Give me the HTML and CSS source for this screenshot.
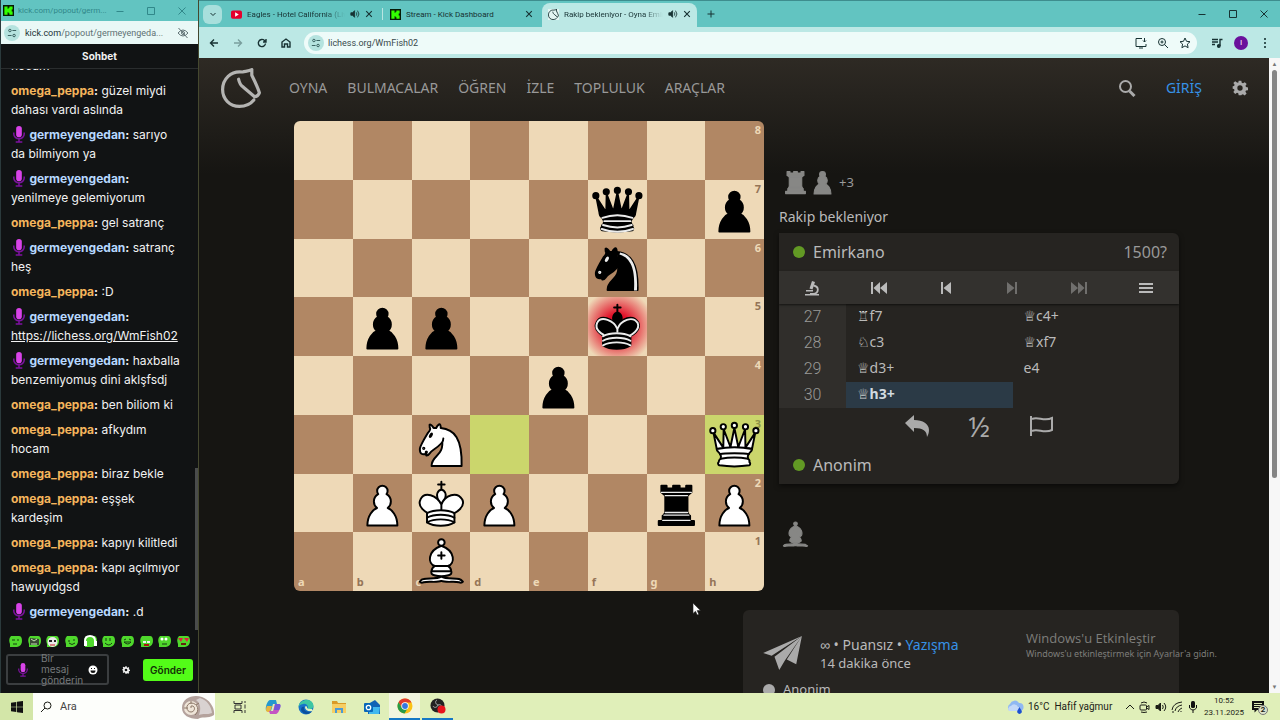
FILE: index.html
```
<!DOCTYPE html>
<html lang="tr">
<head>
  <meta charset="UTF-8" />
  <meta name="viewport" content="width=device-width, initial-scale=1.0" />
  <title>Rakip bekleniyor - Oyna Emirkano</title>
  <link rel="stylesheet" href="styles.css">
</head>
<body>
  <svg class="defs" aria-hidden="true">
    <!-- pieces: --pf is the body, --ps the outline, --pl the inner lines -->
    <symbol id="p" viewBox="0 0 45 45"><path class="pc" d="M22.5 9c-2.21 0-4 1.79-4 4 0 .89.29 1.71.78 2.38C17.33 16.5 16 18.59 16 21c0 2.03.94 3.84 2.41 5.03-3 1.06-7.41 5.55-7.41 13.47h23c0-7.92-4.41-12.41-7.41-13.47 1.47-1.19 2.41-3 2.41-5.03 0-2.41-1.33-4.5-3.28-5.62.49-.67.78-1.49.78-2.38 0-2.21-1.79-4-4-4z"/></symbol>
    <symbol id="n" viewBox="0 0 45 45">
      <g class="pc"><path d="M22 10c10.5 1 16.5 8 16 29H15c0-9 10-6.5 8-21"/><path d="M24 18c.38 2.91-5.55 7.37-8 9-3 2-2.82 4.34-5 4-1.042-.94 1.41-3.04 0-3-1 0 .19 1.23-1 2-1 0-4.003 1-4-4 0-2 6-12 6-12s1.89-1.9 2-3.5c-.73-.994-.5-2-.5-3 1-1 3 2.5 3 2.5h2s.78-1.992 2.5-3c1 0 1 3 1 3"/></g>
      <g class="pl"><circle cx="9" cy="25.5" r=".5"/><ellipse cx="14.5" cy="15.5" rx=".5" ry="1.5" transform="rotate(30 14.5 15.5)"/></g>
      <path class="mane" d="M24.55 10.4l-.45 1.45.5.15c3.15 1 5.65 2.49 7.9 6.75S35.75 29.06 35.25 39l-.05.5h2.25l.05-.5c.5-10.06-.88-16.85-3.25-21.34-2.37-4.49-5.79-6.64-9.19-7.16l-.51-.1z"/>
    </symbol>
    <symbol id="b" viewBox="0 0 45 45">
      <g class="pc"><path d="M9 36c3.39-.97 10.11.43 13.5-2 3.39 2.43 10.11 1.03 13.5 2 0 0 1.65.54 3 2-.68.97-1.65.99-3 .5-3.39-.97-10.11.46-13.5-1-3.39 1.46-10.11.03-13.5 1-1.354.49-2.323.47-3-.5 1.354-1.94 3-2 3-2z"/><path d="M15 32c2.5 2.5 12.5 2.5 15 0 .5-1.5 0-2 0-2 0-2.5-2.5-4-2.5-4 5.5-1.5 6-11.5-5-15.5-11 4-10.5 14-5 15.5 0 0-2.5 1.5-2.5 4 0 0-.5.5 0 2z"/><circle cx="22.5" cy="8" r="2.5"/></g>
      <path class="pl" d="M17.5 26h10M15 30h15m-7.5-14.5v5M20 18h5"/>
    </symbol>
    <symbol id="r" viewBox="0 0 45 45">
      <path class="pc" d="M9 39h27v-3H9v3zm3.5-7l1.5-2.5h17l1.5 2.5h-20zm-.5 4v-4h21v4H12zM14 29.5v-13h17v13H14zM14 16.5L11 14h23l-3 2.5H14zM11 14V9h4v2h5V9h5v2h5V9h4v5H11z"/>
      <path class="pl thin" d="M12 35.5h21m-20-4h19m-18-2h17m-17-13h17M11 14h23"/>
    </symbol>
    <symbol id="q" viewBox="0 0 45 45">
      <g class="pc"><path d="M9 26c8.5-1.5 21-1.5 27 0l2.5-12.5L31 25l-.3-14.1-5.2 13.6-3-14.5-3 14.5-5.2-13.6L14 25 6.5 13.5 9 26z"/><circle cx="6" cy="12" r="2"/><circle cx="14" cy="9" r="2"/><circle cx="22.5" cy="8" r="2"/><circle cx="31" cy="9" r="2"/><circle cx="39" cy="12" r="2"/><path d="M9 26c0 2 1.5 2 2.5 4 1 1.5 1 1 .5 3.5-1.5 1-1.5 2.5-1.5 2.5-1.5 1.5.5 2.5.5 2.5 6.5 1 16.5 1 23 0 0 0 1.5-1 0-2.5 0 0 .5-1.5-1-2.5-.5-2.5-.5-2 .5-3.5 1-2 2.5-2 2.5-4-8.5-1.5-18.5-1.5-27 0z"/></g>
      <path class="pl white-lines" d="M11.5 30c3.5-1 18.5-1 22 0M12 33.5c6-1 15-1 21 0"/>
      <path class="pl black-lines" d="M11 29a35 35 1 0 1 23 0m-21.5 2.5h20m-21 3a35 35 1 0 0 22 0m-23 3a35 35 1 0 0 24 0"/>
    </symbol>
    <symbol id="k" viewBox="0 0 45 45">
      <g class="pc"><path d="M22.5 11.63V6M20 8h5"/><path d="M22.5 25s4.5-7.5 3-10.5c0 0-1-2.5-3-2.5s-3 2.5-3 2.5c-1.5 3 3 10.5 3 10.5"/><path d="M11.5 37c5.5 3.5 15.5 3.5 21 0v-7s9-4.5 6-10.5c-4-6.5-13.5-3.5-16 4V27v-3.5c-3.5-7.5-13-10.5-16-4-3 6 5 10 5 10V37z"/></g>
      <path class="pl black-lines" d="M32 29.5s8.5-4 6.03-9.65C34.15 14 25 18 22.5 24.5l.01 2.1-.01-2.1C20 18 9.906 14 6.997 19.85c-2.497 5.65 4.853 9 4.853 9"/>
      <path class="pl" d="M11.5 30c5.5-3 15.5-3 21 0m-21 3.5c5.5-3 15.5-3 21 0m-21 3.5c5.5-3 15.5-3 21 0"/>
    </symbol>

    <symbol id="mic" viewBox="0 0 14 18"><rect x="4" y="0" width="6" height="12" rx="3" fill="#d843e8"/><path d="M1.500 7v1.500a5.500 5 0 0 0 11 0V7M7 13.500V17M3.500 17h7" fill="none" stroke="#7d12a0" stroke-width="1.600"/></symbol>
    <symbol id="kick" viewBox="0 0 12 12"><path fill="#061a06" d="M0 0h12v12H0z"/><path fill="#3f0" d="M1.500 1.500h3.500v2.500h1v-1h1v-1.500h3.500v3.500h-1v2h1v3.500H7V9H6V8H5v2.500H1.500z"/></symbol>
    <symbol id="close" viewBox="0 0 10 10"><path d="M1.500 1.500l7 7m0-7l-7 7"/></symbol>
    <symbol id="max" viewBox="0 0 10 10"><path d="M1.500 1.500h7v7h-7z"/></symbol>
    <symbol id="min" viewBox="0 0 10 10"><path d="M1.500 5.500h7"/></symbol>
    <symbol id="tune" viewBox="0 0 12 12"><path d="M6.500 3H11M1 9h4.500"/><circle cx="3.500" cy="3" r="1.500"/><circle cx="8.500" cy="9" r="1.500"/></symbol>
    <symbol id="sound" viewBox="0 0 12 12"><path d="M1 4.500h2L5.500 2v8L3 7.500H1z" fill="currentColor"/><path d="M7.500 4q1.500 2 0 4M9 2q3.500 4 0 8"/></symbol>
    <symbol id="gear" viewBox="0 0 24 24"><path fill="currentColor" fill-rule="evenodd" d="M10 1h4l.6 3.200 1.900.8 2.700-1.800 2.800 2.800-1.800 2.700.8 1.900 3 .6v4l-3.100.6-.8 1.900 1.800 2.700-2.800 2.800-2.700-1.800-1.900.8L14 23h-4l-.6-3.100-1.900-.8-2.700 1.800L2 18.100l1.800-2.700-.8-1.900-2-.5V9.500l2.100-.5.8-1.900L2 4.600 4.800 2l2.700 1.800L9.400 4zM12 8a4 4 0 1 0 0 8 4 4 0 0 0 0-8z"/></symbol>
    <symbol id="horse" viewBox="0 0 50 50"><path fill="none" stroke="currentColor" stroke-linejoin="round" stroke-linecap="round" d="M38.500 2C35 4 31 4 27 5 12 3 2 14 2 27c0 12 9 21 21 21 8 0 14-3 18-8M38.500 2v7c4 8 7 14 9.500 22-1 3-3 5-6 5L28 24c-3-2-5-5-6-10"/></symbol>
    <symbol id="prev" viewBox="0 0 16 14"><path fill="currentColor" d="M3 1h2v12H3zM13 1v12L5.500 7z"/></symbol>
    <symbol id="first" viewBox="0 0 16 14"><path fill="currentColor" d="M0 1h2v12H0zM9 1v12L2.500 7zM16 1v12L9 7z"/></symbol>
  </svg>

  <main class="desktop">
    <section class="chat-window">
      <header class="chat-title">
        <svg class="i11"><use href="#kick"/></svg>
        <span class="title-text">kick.com/popout/germ...</span>
        <div class="win-buttons">
          <svg class="line i10"><use href="#min"/></svg>
          <svg class="line i10"><use href="#max"/></svg>
          <svg class="line i10"><use href="#close"/></svg>
        </div>
      </header>
      <div class="chat-url">
        <span class="tune"><svg class="line i10"><use href="#tune"/></svg></span>
        <span class="url-text"><b>kick.com</b>/popout/germeyengeda...</span>
        <svg class="line i12" viewBox="0 0 12 12"><path d="M1 6q5-6 10 0-5 6-10 0zM1.500 1l9 10"/><circle cx="6" cy="6" r="1.500"/></svg>
      </div>
      <h2 class="chat-head">Sohbet</h2>
      <ul class="messages" id="messages"></ul>
      <div class="emotes" id="emotes"></div>
      <form class="composer">
        <div class="composer-box">
          <svg class="mic"><use href="#mic"/></svg>
          <textarea aria-label="Mesaj" rows="3" placeholder="Bir&#10;mesaj&#10;gönderin"></textarea>
          <svg class="i10" viewBox="0 0 10 10"><circle cx="5" cy="5" r="4.500" fill="#fff"/><path d="M2.500 5.500h5a2.500 2.500 0 0 1-5 0zM3 3h1v1H3zM6 3h1v1H6z" fill="#111"/></svg>
        </div>
        <button type="button" class="bare" aria-label="Ayarlar"><svg class="i8"><use href="#gear"/></svg></button>
        <button type="button" class="send">Gönder</button>
      </form>
    </section>

    <section class="browser">
      <header class="tabs">
        <button class="tab-list" aria-label="Sekmeler"><svg class="line i8" viewBox="0 0 8 8"><path d="M1.500 3L4 5.500 6.500 3"/></svg></button>
        <div class="tab divided">
          <svg class="i11" viewBox="0 0 12 12"><rect y="1.500" width="12" height="9" rx="2" fill="#e5002d"/><path d="M4.500 3.500v5L8.500 6z" fill="#fff"/></svg>
          <span class="tab-name fade">Eagles - Hotel California (Live 1977)</span>
          <svg class="line i10"><use href="#sound"/></svg>
          <svg class="line bold i8"><use href="#close"/></svg>
        </div>
        <div class="tab">
          <svg class="i11"><use href="#kick"/></svg>
          <span class="tab-name">Stream - Kick Dashboard</span>
          <svg class="line bold i8"><use href="#close"/></svg>
        </div>
        <div class="tab active">
          <svg class="i11 horse-small"><use href="#horse"/></svg>
          <span class="tab-name fade">Rakip bekleniyor - Oyna Emirkano</span>
          <svg class="line i10"><use href="#sound"/></svg>
          <svg class="line bold i8"><use href="#close"/></svg>
        </div>
        <button class="new-tab bare" aria-label="Yeni sekme"><svg class="line i10" viewBox="0 0 10 10"><path d="M5 1.500v7M1.500 5h7"/></svg></button>
        <div class="win-buttons">
          <svg class="line i10"><use href="#min"/></svg>
          <svg class="line i10"><use href="#max"/></svg>
          <svg class="line i10"><use href="#close"/></svg>
        </div>
      </header>
      <div class="toolbar">
        <svg class="line bold i10" viewBox="0 0 10 10"><path d="M9 5H1.500M5 1.500L1.500 5 5 8.500"/></svg>
        <svg class="line bold dim i10" viewBox="0 0 10 10"><path d="M1 5h7.500M5 1.500L8.500 5 5 8.500"/></svg>
        <svg class="line bold i10" viewBox="0 0 10 10"><path d="M8.500 5.500A3.600 3.600 0 1 1 7.500 2.500L8.800 4M9 1v3H6"/></svg>
        <svg class="line bold i10" viewBox="0 0 10 10"><path d="M1 9V4l4-3 4 3v5H6.500V6h-3v3z"/></svg>
        <div class="omnibox">
          <span class="tune"><svg class="line i10"><use href="#tune"/></svg></span>
          <input class="address" aria-label="Adres" value="lichess.org/WmFish02">
          <svg class="line i12" viewBox="0 0 12 12"><path d="M7 1.500H1v8h10V7M4 11h4M9.500 1v4M8 3.500L9.500 5 11 3.500"/></svg>
          <svg class="line i12" viewBox="0 0 12 12"><circle cx="5" cy="5" r="3.500"/><path d="M7.500 7.500L11 11M3.500 5h3M5 3.500v3"/></svg>
          <svg class="line i12" viewBox="0 0 12 12"><path d="M6 1l1.500 3.300 3.500.4-2.600 2.400.7 3.600L6 8.900l-3.100 1.800.7-3.600L1 4.700l3.500-.4z"/></svg>
        </div>
        <svg class="line bold i12" viewBox="0 0 12 12"><path d="M1 2.500h6M1 5h6M1 7.500h3M9 9V2.500h2.500"/><circle cx="7.800" cy="9" r="1.200" fill="currentColor"/></svg>
        <span class="avatar">I</span>
        <svg class="i12" viewBox="0 0 12 12"><path d="M5.200 1h1.600v2H5.200zM5.200 5h1.600v2H5.200zM5.200 9h1.600v2H5.200z" fill="#173233"/></svg>
      </div>

      <div class="viewport">
        <div class="page">
          <header class="site-head">
            <a href="#" class="logo" aria-label="lichess.org"><svg><use href="#horse"/></svg></a>
            <nav class="site-nav">
              <a href="#">OYNA</a>
              <a href="#">BULMACALAR</a>
              <a href="#">ÖĞREN</a>
              <a href="#">İZLE</a>
              <a href="#">TOPLULUK</a>
              <a href="#">ARAÇLAR</a>
            </nav>
            <button class="bare" aria-label="Ara"><svg class="i18" viewBox="0 0 18 18"><circle cx="7.500" cy="7.500" r="5.500" fill="none" stroke="currentColor" stroke-width="2"/><path d="M11.500 12l5 5" stroke="currentColor" stroke-width="3"/></svg></button>
            <a href="#" class="signin">GİRİŞ</a>
            <button class="bare" aria-label="Tercihler"><svg class="i16"><use href="#gear"/></svg></button>
          </header>

          <div class="round">
            <div class="board" id="board"></div>
            <aside class="side">
              <div class="material">
                <svg class="piece grey"><use href="#r"/></svg>
                <svg class="piece grey"><use href="#p"/></svg>
                <span>+3</span>
              </div>
              <div class="waiting">Rakip bekleniyor</div>
              <div class="panel">
                <div class="player"><i class="dot"></i><span>Emirkano</span><span class="rating">1500?</span></div>
                <div class="controls">
                  <button aria-label="Analiz"><svg class="i16" viewBox="0 0 16 16"><path fill="currentColor" d="M8 1l3 1-2.500 7.500-3-1zM1 14h14v1.500H1zM2 10h7v1.500H2z"/><path d="M9.500 5.500c6 1 5.500 7.500 0 8.500H6" fill="none" stroke="currentColor" stroke-width="1.800"/></svg></button>
                  <button aria-label="İlk"><svg class="step"><use href="#first"/></svg></button>
                  <button aria-label="Önceki"><svg class="step"><use href="#prev"/></svg></button>
                  <button aria-label="Sonraki" class="off"><svg class="step flip"><use href="#prev"/></svg></button>
                  <button aria-label="Son" class="off"><svg class="step flip"><use href="#first"/></svg></button>
                  <button aria-label="Menü"><svg class="step" viewBox="0 0 16 14"><path d="M1 3h14M1 7h14M1 11h14" stroke="currentColor" stroke-width="2"/></svg></button>
                </div>
                <table class="moves">
                  <tr><th>27</th><td><b>♖</b>f7</td><td><b>♕</b>c4+</td></tr>
                  <tr><th>28</th><td><b>♘</b>c3</td><td><b>♕</b>xf7</td></tr>
                  <tr><th>29</th><td><b>♕</b>d3+</td><td>e4</td></tr>
                  <tr><th>30</th><td class="current"><b>♕</b>h3+</td><td></td></tr>
                </table>
                <div class="actions">
                  <button aria-label="Geri al"><svg class="i26" viewBox="0 0 26 26"><path fill="currentColor" d="M1 10l9-8v5c9 0 15 4 15 10 0 3-1 5-2 7 0-6-4-9-13-9v4z"/></svg></button>
                  <button aria-label="Beraberlik">½</button>
                  <button aria-label="Terk et"><svg class="i26" viewBox="0 0 26 26"><path d="M3 3v20M4 6c6-3 12 3 20-1v12c-8 4-14-2-20 1" fill="none" stroke="currentColor" stroke-width="2"/></svg></button>
                </div>
                <div class="player"><i class="dot"></i><span>Anonim</span></div>
              </div>
              <div class="material bottom"><svg class="piece grey"><use href="#b"/></svg></div>
            </aside>
            <div class="game-meta">
              <svg class="plane" viewBox="0 0 42 36"><path fill="currentColor" d="M41 0L0 18l9 3zM41 0L12 22l5 14 6-10zM41 0L25 25l10 5z"/></svg>
              <div class="meta-text">
                <div class="setup">∞ • Puansız • <a href="#">Yazışma</a></div>
                <div>14 dakika önce</div>
              </div>
              <div class="meta-player"><i class="dot"></i>Anonim</div>
            </div>
          </div>
        </div>
        <div class="scrollbar"><span>▲</span><i></i><span>▼</span></div>
      </div>
    </section>
    <div class="activate"><p>Windows'u Etkinleştir</p><small>Windows'u etkinleştirmek için Ayarlar'a gidin.</small></div>
    <svg class="cursor" viewBox="0 0 10 14"><path d="M1 1v10.500l2.500-2.200 1.700 3.700 1.600-.8L5.200 8.600H8.500z" fill="#fff" stroke="#222" stroke-width=".6"/></svg>
  </main>

  <footer class="taskbar">
    <button class="start" aria-label="Başlat"><svg class="i12" viewBox="0 0 12 12"><path fill="#111" d="M0 1.700l5.300-.8v4.800H0zM6 .8L12 0v5.700H6zM0 6.300h5.300v4.800L0 10.300zM6 6.300h6V12l-6-.8z"/></svg></button>
    <label class="search">
      <svg class="line i12" viewBox="0 0 12 12"><circle cx="7.500" cy="4.500" r="3.500"/><path d="M5 7L1 11"/></svg>
      <input placeholder="Ara">
      <svg class="shell" viewBox="0 0 34 24"><path d="M1 13C1 3 12-1 21 2c8 3 13 11 12 18-6 4-13 1-16 4C8 24 1 20 1 13z" fill="#b4a29c"/><path d="M19 3c7 2 11 8 12 15-5 2-9 0-13 2 2-6 2-11-3-15z" fill="#d9d2d1"/><circle cx="10" cy="13" r="7" fill="#efe5d8"/><path d="M10 13q-1-3 2-2c3 2 1 6-2 6-5 0-6-8 0-9 7 0 9 8 4 12M3 13l4 0m3-7v3m5 1l3-2" fill="none" stroke="#8d7868"/></svg>
    </label>
    <div class="apps">
      <a href="#" aria-label="Görev görünümü"><svg class="i14 line" viewBox="0 0 14 14"><path d="M1 1v2.500h8V1M1 13v-2.500h8V13M2 5h6v4H2zM12 1v2m0 1.500v4m0 1.500v3" stroke="#333"/></svg></a>
      <a href="#" aria-label="Copilot"><svg class="i16" viewBox="0 0 16 16"><path d="M5 1h6l1 4H8L6 12H2c-3 0 0-11 3-11z" fill="#2498cf"/><path d="M2 7h5l-2 6H3c-3 0-2-4-1-6z" fill="#e8b43e"/><path d="M11 15H5l-1-3h4l2-7h4c3 0 0 10-3 10z" fill="#c455c3"/><path d="M10 5h4c3 0 1 5 0 6H9z" fill="#7557d8"/></svg></a>
      <a href="#" aria-label="Edge"><svg class="i16" viewBox="0 0 16 16"><circle cx="8" cy="8" r="7.500" fill="#1874c9"/><path d="M.5 8C1 0 15-2 15.500 7c0 3-4 4-6 2.500C11 7 8 4 5 5 2 5.500 1 7 .5 8z" fill="#3cc6a3"/><path d="M6 8c-1 4 4 6 8 4-3 5-10 3-11-1 0-3 2-4 3-3z" fill="#0c4f9c"/><path d="M7 8c0-1 2-1 2 0s0 2 5 2l1 2c-5 1-8-1-8-4z" fill="#e3f3c4"/></svg></a>
      <a href="#" aria-label="Dosyalar"><svg class="i16" viewBox="0 0 16 16"><path d="M1 2h5l1 2h8v3H1z" fill="#d99b27"/><path d="M1 5h14v9H1z" fill="#f6ce63"/><path d="M4 14V9h8v5h-2v-3H6v3z" fill="#4c9bd4"/></svg></a>
      <a href="#" aria-label="Outlook"><svg class="i16" viewBox="0 0 16 16"><path d="M4 5l7-4 5 5v9H4z" fill="#1362b5"/><path d="M5 8h11l-1 7H5z" fill="#42b8ee"/><rect y="4" width="9" height="9" rx="1" fill="#0967b9"/><circle cx="4.500" cy="8.500" r="2.200" fill="none" stroke="#fff" stroke-width="1.300"/></svg></a>
      <a href="#" aria-label="Chrome" class="open lit"><svg class="i16" viewBox="0 0 16 16"><circle cx="8" cy="8" r="7.500" fill="#fbc116"/><path d="M1.500 4.200A7.500 7.500 0 0 1 14.500 4.500H8L5 10z" fill="#df3a2f"/><path d="M1.500 4.200a7.500 7.500 0 0 0 6 11.300L11 9.800 5 10z" fill="#279b48"/><circle cx="8" cy="8" r="3.700" fill="#fff"/><circle cx="8" cy="8" r="2.900" fill="#3476e0"/></svg></a>
      <a href="#" aria-label="OBS" class="open"><svg class="i16" viewBox="0 0 16 16"><circle cx="7.500" cy="7.500" r="7" fill="#222"/><path d="M8 7c-3-1-3-4-1-5m1 5c-1 3-4 3-5 1m5-1c3-1 4 1 4 3" fill="none" stroke="#aaa"/><circle cx="11.500" cy="11.500" r="4" fill="#e8141c"/></svg></a>
    </div>
    <div class="tray">
      <svg class="cloud" viewBox="0 0 18 16"><path d="M4 12a4 4 0 0 1 0-7 5 5 0 0 1 9-1 4 4 0 0 1 1 8z" fill="#8fb8f2"/><path d="M3 12a3 3 0 0 1 2-5 4 4 0 0 1 7 1 2 2 0 0 1 1 4z" fill="#c3d8f8"/><path d="M13.500 8l2 3.500a2.300 2.300 0 1 1-4 0z" fill="#1c50d0"/></svg>
      <span class="weather">16°C&nbsp; Hafif yağmur</span>
      <svg class="line i10" viewBox="0 0 10 10"><path d="M1 7l4-4 4 4"/></svg>
      <svg class="line i12" viewBox="0 0 12 12"><rect x="1" y="4" width="6.500" height="5" rx="1"/><path d="M7.500 6L10 4.500v4L7.500 7M2 2q3-2 6 0M2 11q3 1 6 0"/></svg>
      <svg class="line i12"><use href="#sound"/></svg>
      <svg class="line i12" viewBox="0 0 12 12"><path d="M1 9Q2 2 11 1M4 10q1-5 7-6M7 11q1-3 4-4M10 10v1M1 11h2"/></svg>
      <svg class="i12" viewBox="0 0 12 12"><rect x="4" width="4" height="7" rx="1.500" fill="#111"/><path d="M2.500 4v3q3.500 4 7 0V4M6 9v3" fill="none" stroke="#111"/></svg>
      <time class="clock">10:52<br>23.11.2025</time>
      <span class="notify"><svg class="i12" viewBox="0 0 12 12"><path d="M0 0h12v9H5l-2.500 2.500V9H0z" fill="#111"/><path d="M2 2.500h8M2 4.500h8M2 6.500h5" stroke="#dce9b4"/></svg><b>2</b></span>
    </div>
  </footer>

  <script>
    const fen = "8/5q1p/5n2/1pp2k2/4p3/2N4Q/1PKP2rP/2B5";
    const lastMove = ["d3", "h3"];
    const check = "f5";
    const files = "abcdefgh";
    const board = document.getElementById("board");

    fen.split("/").forEach((row, r) => {
      const cells = row.replace(/\d/g, (d) => ".".repeat(d));
      [...cells].forEach((c, f) => {
        const name = files[f] + (8 - r);
        const sq = document.createElement("div");
        sq.className = "sq " + ((r + f) % 2 ? "dark" : "light");
        if (lastMove.includes(name)) sq.classList.add("last");
        if (name === check) sq.classList.add("check");
        if (f === 7) sq.innerHTML += `<span class="rank">${8 - r}</span>`;
        if (r === 7) sq.innerHTML += `<span class="file">${files[f]}</span>`;
        if (c !== ".") {
          const side = c === c.toLowerCase() ? "black" : "white";
          sq.innerHTML += `<svg class="piece ${side}"><use href="#${c.toLowerCase()}"/></svg>`;
        }
        board.appendChild(sq);
      });
    });

    const o = "omega_peppa", g = "germeyengedan";
    const messages = [
      [o, "nerede kaldın hocam"],
      [o, "güzel miydi dahası vardı aslında"],
      [g, "sarıyo da bilmiyom ya"],
      [g, "yenilmeye gelemiyorum"],
      [o, "gel satranç"],
      [g, "satranç heş"],
      [o, ":D"],
      [g, '<a href="#">https://lichess.org/WmFish02</a>'],
      [g, "haxballa benzemiyomuş dini aklşfsdj"],
      [o, "ben biliom ki"],
      [o, "afkydım hocam"],
      [o, "biraz bekle"],
      [o, "eşşek kardeşim"],
      [o, "kapıyı kilitledi"],
      [o, "kapı açılmıyor hawuyıdgsd"],
      [g, ".d"],
    ];
    document.getElementById("messages").innerHTML = messages.map(([who, text]) => `
      <li>${who === g ? '<svg class="mic"><use href="#mic"/></svg> ' : ""}<b class="${who}">${who}</b><b>:</b> ${text}</li>`).join("");

    // small green faces, the inner part differs
    const faces = [
      '<path d="M3 5h3M8 5h2M4 9h4" stroke="#173c10"/>',
      '<path d="M2 3l9 1v6H2z" fill="#3b4a35"/><path d="M3 4l3 2 3-2M3 9h6" stroke="#c6e7b5" fill="none"/>',
      '<circle cx="6.500" cy="7" r="5" fill="#e8e8e8"/><path d="M3 5h3v2H3zM8 5h2v2H8z" fill="#222"/><path d="M4 10h5" stroke="#c22"/>',
      '<path d="M3 6h2M8 5h2M4 8q3 3 6 0" stroke="#173c10" fill="none"/>',
      '<path d="M1 6q0-5 5-5t5 5" stroke="#fff" stroke-width="2" fill="none"/><path d="M0 6h3v5H0zM10 6h3v5h-3z" fill="#fff"/>',
      '<path d="M4 3v3M8 3v3M3 8q4 4 7 0" stroke="#173c10" fill="none"/>',
      '<path d="M3 5l2-1M8 4l2 1M3 7q4 4 7 0z" stroke="#173c10" fill="none"/>',
      '<path d="M3 6h3v2H3zM7 6h3v2H7z" fill="#eee"/><path d="M4 10h5" stroke="#a11" stroke-width="2"/>',
      '<circle cx="4" cy="4" r="1.500" fill="#fff"/><circle cx="8" cy="4" r="1.500" fill="#fff"/><path d="M4 9h5" stroke="#173c10"/>',
      '<path d="M1 3h5L4 7zM7 3h5l-2 4z" fill="#e02040"/><path d="M4 8h5v2H4z" fill="#621"/>',
    ];
    document.getElementById("emotes").innerHTML = faces.map((f) => `
      <svg viewBox="0 0 13 13"><path d="M2 1h8q3 0 3 5t-5 6H1V9Q-1 4 2 1z" fill="#4fd82c"/>${f}</svg>`).join("");
  </script>
</body>
</html>
```
FILE: styles.css
```
* { box-sizing: border-box; }
body { margin: 0; height: 100vh; display: flex; flex-direction: column; overflow: hidden; background: #161512; font-family: "Noto Sans", sans-serif; }
a { color: inherit; text-decoration: none; }
button { font: inherit; color: inherit; border: 0; padding: 0; background: none; }
svg { flex: none; display: block; }
.defs { position: absolute; width: 0; height: 0; }
.i8 { width: 8px; height: 8px; }
.i10 { width: 10px; height: 10px; }
.i11 { width: 11px; height: 11px; }
.i12 { width: 12px; height: 12px; }
.i14 { width: 14px; height: 14px; }
.i16 { width: 16px; height: 16px; }
.i18 { width: 18px; height: 18px; }
.i26 { width: 26px; height: 26px; }
.line { fill: none; stroke: currentColor; stroke-width: 1; }
.bold { stroke-width: 1.4; }
.dim { opacity: .4; }
.bare { display: flex; align-items: center; justify-content: center; }

.desktop { flex: 1; min-height: 0; display: flex; position: relative; }

/* chat popup */
.chat-window { width: 199px; display: flex; flex-direction: column; background: #111314; border-left: 1px solid #2b3a3c; border-right: 1px solid #45482f; color: #f2f2f2; font-family: Inter, sans-serif; }
.chat-title { height: 21px; display: flex; align-items: center; gap: 4px; padding: 0 11px 0 2px; background: #62c4c1; color: #31888a; font: 8px Roboto, sans-serif; }
.title-text { white-space: nowrap; }
.chat-url { height: 23px; display: flex; align-items: center; gap: 5px; padding: 0 9px 0 3px; background: #e9f8f6; color: #607174; font: 9px Roboto, sans-serif; }
.url-text { flex: 1; white-space: nowrap; }
.url-text b { font-weight: 400; color: #1c3437; }
.tune { width: 16px; height: 16px; flex: none; border-radius: 50%; background: #b5e3df; color: #244a4b; display: flex; align-items: center; justify-content: center; }
.chat-head { margin: 0; height: 25px; border-bottom: 1px solid #2a2d2e; font-size: 10px; line-height: 24px; text-align: center; }
.messages { flex: 1; min-height: 0; margin: 0; padding: 0 11px 9px 10px; list-style: none; overflow: hidden; display: flex; flex-direction: column; justify-content: flex-end; gap: 6px; font-size: 12px; line-height: 19px; border-right: 3px solid; border-image: linear-gradient(#111314 71%, #4a4c4c 71%) 1; }
.messages li { flex: none; }
.messages a { text-decoration: underline; }
.messages .mic { display: inline-block; vertical-align: -4px; margin-left: 1px; }
.mic { width: 14px; height: 17px; }
.omega_peppa { color: #f5b55c; }
.germeyengedan { color: #b7d8ff; }
.emotes { display: flex; justify-content: space-between; padding: 5px 8px 6px; }
.emotes svg { width: 13px; height: 13px; fill: none; }
.composer { display: flex; align-items: center; justify-content: space-between; padding: 0 5px 8px; }
.composer-box { width: 103px; height: 31px; display: flex; align-items: center; border: 2px solid #3b3e40; border-radius: 3px; padding: 0 9px 0 8px; }
.composer-box .mic { height: 14px; }
.composer textarea { flex: 1; min-width: 0; height: 33px; margin: 0 0 0 11px; padding: 0; border: 0; background: none; resize: none; overflow: hidden; font: 10px/11px Inter, sans-serif; color: #fff; }
.composer textarea::placeholder { color: #777a7c; }
.send { width: 50px; height: 22px; border-radius: 3px; background: #53fc18; color: #123006; font-size: 10px; font-weight: 600; }

/* browser */
.browser { flex: 1; min-width: 0; display: flex; flex-direction: column; color: #173233; font: 8px Roboto, sans-serif; }
.tabs { height: 27px; display: flex; align-items: center; padding: 0 11px 0 4px; background: #62c4c1; border-top: 1px solid #3e8d8e; }
.tab-list { width: 19px; height: 19px; margin-right: 2px; border-radius: 6px; background: #a8dfdc; display: flex; align-items: center; justify-content: center; }
.tab { width: 159px; height: 23px; display: flex; align-items: center; gap: 5px; padding: 0 9px 0 7px; }
.divided { border-right: 1px solid #b9e5e2; height: 12px; padding-right: 9px; }
.tab.active { width: 155px; height: 24px; align-self: flex-end; padding: 0 6px 2px; border-radius: 8px 8px 0 0; background: #bce8e5; }
.tab-name { flex: 1; min-width: 0; overflow: hidden; white-space: nowrap; }
.fade { -webkit-mask-image: linear-gradient(90deg, #000 80%, transparent); mask-image: linear-gradient(90deg, #000 80%, transparent); }
.horse-small { stroke-width: 4; background: #e4f5f3; }
.new-tab { width: 28px; }
.win-buttons { margin-left: auto; display: flex; gap: 21px; }
.toolbar { height: 31px; display: flex; align-items: center; gap: 14px; padding: 0 9px 0 10px; background: #bce8e5; }
.omnibox { flex: 1; height: 22px; margin-left: -1px; display: flex; align-items: center; gap: 10px; padding: 0 6px 0 4px; border-radius: 11px; background: #eefbf9; }
.omnibox .tune { margin-right: -6px; }
.address { flex: 1; min-width: 0; border: 0; padding: 0; background: none; color: #38494b; font: 9px Roboto, sans-serif; }
.avatar { width: 14px; height: 14px; margin: 0 -3px; border-radius: 50%; background: #6a119c; color: #fff; font-size: 8px; line-height: 14px; text-align: center; }

.viewport { flex: 1; min-height: 0; display: flex; }
.page { flex: 1; min-width: 0; overflow: hidden; background: linear-gradient(#2e2a24, #161512 116px); color: #bababa; font-family: "Noto Sans", sans-serif; font-size: 14px; }
.scrollbar { width: 11px; display: flex; flex-direction: column; align-items: center; background: #f7f7f7; color: #777; font-size: 6px; line-height: 12px; }
.scrollbar i { width: 5px; height: 408px; border-radius: 3px; background: #858585; }
.scrollbar span:last-child { margin-top: auto; }

.site-head { height: 59px; display: flex; align-items: center; padding: 0 21px 0 22px; color: #aaa; }
.logo { color: #b4b4b2; }
.logo svg { width: 40px; height: 40px; stroke-width: 4; }
.site-nav { flex: 1; display: flex; gap: 20px; margin-left: 28px; color: #999; }
.signin { margin: 0 30px; color: #3692e7; }

.round { display: grid; grid-template-columns: 470px 400px; column-gap: 15px; justify-content: center; margin-top: 4px; padding-left: 5px; }
.board { display: grid; grid-template-columns: repeat(8, minmax(0, 1fr)); grid-template-rows: repeat(8, minmax(0, 1fr)); aspect-ratio: 1; align-self: start; border-radius: 6px; overflow: hidden; }
.sq { position: relative; }
.light { background: #eed9b7; color: #957557; }
.dark { background: #b18764; color: #eed9b7; }
.last { background: #cbd66c; color: #8d9148; }
.check { background: radial-gradient(circle, #e4001c 0%, #e2122a 30%, rgba(226, 30, 50, 0) 88%), #eed9b7; }
.rank, .file { position: absolute; font-size: 11px; line-height: 12px; font-weight: 700; }
.rank { top: 3px; right: 3px; }
.file { left: 4px; bottom: 3px; }

.piece { position: relative; width: 100%; height: 100%; stroke-width: 1.5; stroke-linecap: round; stroke-linejoin: round; }
.white { --pf: #fff; --ps: #000; --pl: #000; --mane: none; --bl: none; --wl: #000; }
.black { --pf: #000; --ps: #000; --pl: #ececec; --mane: #ececec; --bl: #ececec; --wl: none; }
.grey { --pf: #878785; --ps: #878785; --pl: #878785; --mane: none; --bl: none; --wl: none; width: 33px; height: 33px; }
.pc { fill: var(--pf); stroke: var(--ps); }
.pl { fill: none; stroke: var(--pl); }
.thin { stroke-width: 1; }
.mane { fill: var(--mane); stroke: none; }
.black-lines { stroke: var(--bl); }
.white-lines { stroke: var(--wl); }

.material { height: 33px; margin-top: 44px; display: flex; align-items: center; font-size: 13px; color: #999; }
.material .piece + .piece { margin-left: -6px; }
.material.bottom { margin-top: 34px; }
.waiting { height: 35px; line-height: 37px; }
.panel { background: #262421; border-radius: 0 6px 6px 0; overflow: hidden; box-shadow: 0 2px 5px #0008; }
.player { height: 38px; display: flex; align-items: center; gap: 8px; padding: 0 12px 0 14px; font-size: 16px; }
.dot { width: 12px; height: 12px; border-radius: 50%; background: #629924; }
.rating { margin-left: auto; color: #999; }
.controls { height: 33px; display: flex; background: #33312e; box-shadow: 0 1px 2px #0009; position: relative; }
.controls button { flex: 1; display: flex; align-items: center; justify-content: center; }
.step { width: 16px; height: 14px; }
.flip { transform: scaleX(-1); }
.off { opacity: .45; }
.moves { width: 100%; table-layout: fixed; border-collapse: collapse; }
.moves th { width: 67px; padding: 0; background: #302e2b; color: #9a9a98; font-weight: 300; font-family: Roboto, sans-serif; font-size: 16px; line-height: 24px; }
.moves td { height: 26px; padding: 0 11px 2px; line-height: 18px; }
.moves b { font-family: "DejaVu Sans", sans-serif; line-height: 1; color: #d6d6d4; }
.moves .current { background: #2b3a46; color: #d2dbe0; font-weight: 700; }
.actions { height: 38px; display: flex; justify-content: center; gap: 36px; font-size: 28px; line-height: 36px; color: #aaa; }
.actions button { width: 26px; height: 36px; display: flex; align-items: center; justify-content: center; }

.game-meta { grid-column: 1 / 3; justify-self: end; width: 436px; height: 120px; margin-top: 19px; padding: 25px 20px; display: grid; grid-template-columns: 40px 1fr; column-gap: 17px; grid-template-rows: 39px auto; border-radius: 6px; background: #262421; font-size: 13px; line-height: 19px; }
.plane { width: 40px; height: 34px; margin-top: 1px; color: #aaa; }
.setup { font-size: 14px; }
.setup a { color: #3692e7; }
.meta-player { grid-column: 1 / 3; display: flex; gap: 8px; align-items: center; }
.meta-player .dot { background: #aaa; }

.activate { position: absolute; left: calc(100% - 254px); bottom: 32px; color: #7e7e7b; white-space: nowrap; }
.activate p { margin: 0; font: 13px/17px "Open Sans", sans-serif; }
.activate small { display: block; font-size: 9px; line-height: 14px; }
.cursor { position: absolute; left: 692px; top: 602px; width: 10px; height: 14px; }

/* taskbar */
.taskbar { height: 27px; display: flex; background: #e0efb9; color: #1b1d16; font: 10px Roboto, sans-serif; }
.start { width: 33px; display: flex; align-items: center; justify-content: center; background: #d3e6a8; }
.search { width: 182px; display: flex; align-items: center; gap: 8px; padding-left: 7px; background: #fdfefb; }
.search input { flex: 1; min-width: 0; border: 0; padding: 0; background: none; font: 11px Roboto, sans-serif; }
.search input::placeholder { color: #444; }
.shell { width: 34px; height: 24px; }
.apps { display: flex; margin-left: 9px; gap: 2px; }
.apps a { width: 31px; display: flex; align-items: center; justify-content: center; }
.apps .open { border-bottom: 2px solid #1678c6; }
.apps .lit { background: #f2f5df; }
.tray { margin-left: auto; display: flex; align-items: center; gap: 4px; padding-right: 10px; }
.cloud { width: 18px; height: 16px; }
.weather { width: 93px; white-space: nowrap; }
.clock { width: 42px; text-align: center; font-size: 8px; line-height: 12px; }
.notify { position: relative; margin-left: 3px; width: 18px; }
.notify b { position: absolute; left: 6px; top: 4px; width: 10px; height: 10px; border-radius: 50%; background: #dde3cc; border: 1px solid #777; font-size: 8px; line-height: 8px; text-align: center; }
```
